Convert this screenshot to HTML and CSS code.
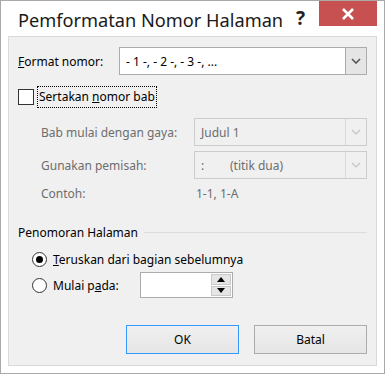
FILE: index.html
```html
<!DOCTYPE html>
<html lang="id">
<head>
    <meta charset="UTF-8">
    <title>Pemformatan Nomor Halaman</title>
    <link rel="stylesheet" href="styles.css">
</head>
<body>
    <div class="window">
        <div class="title-bar">
            <span class="title">Pemformatan Nomor Halaman</span>
            <span class="help">?</span>
            <span class="close">
                <svg width="14" height="12" viewBox="0 0 14 12">
                    <path d="M2 1 L12 11 M12 1 L2 11" stroke="#fff" stroke-width="2.6" fill="none"/>
                </svg>
            </span>
        </div>

        <div class="client">
            <div class="row format-row">
                <label class="label"><u>F</u>ormat nomor:</label>
                <div class="combo">
                    <span class="combo-text">- 1 -, - 2 -, - 3 -, ...</span>
                    <span class="combo-btn">
                        <svg width="10" height="6" viewBox="0 0 10 6"><path d="M1 1 L5 5 L9 1" stroke="#555" stroke-width="1.6" fill="none"/></svg>
                    </span>
                </div>
            </div>

            <div class="row check-row">
                <span class="checkbox"></span>
                <span class="focus-label">Sertakan <u>n</u>omor bab</span>
            </div>

            <div class="row sub-row first">
                <label class="label sub-label">Bab mulai dengan gaya:</label>
                <div class="combo disabled">
                    <span class="combo-text">Judul 1</span>
                    <span class="combo-btn">
                        <svg width="10" height="6" viewBox="0 0 10 6"><path d="M1 1 L5 5 L9 1" stroke="#c4c4c4" stroke-width="1.2" fill="none"/></svg>
                    </span>
                </div>
            </div>

            <div class="row sub-row">
                <label class="label sub-label">Gunakan pemisah:</label>
                <div class="combo disabled">
                    <span class="combo-text"><span class="sep">:</span>(titik dua)</span>
                    <span class="combo-btn">
                        <svg width="10" height="6" viewBox="0 0 10 6"><path d="M1 1 L5 5 L9 1" stroke="#c4c4c4" stroke-width="1.2" fill="none"/></svg>
                    </span>
                </div>
            </div>

            <div class="row example-row">
                <span class="label sub-label">Contoh:</span>
                <span class="example-value">1-1, 1-A</span>
            </div>

            <div class="group-head">
                <span>Penomoran Halaman</span>
                <span class="group-line"></span>
            </div>

            <div class="row radio-row">
                <span class="radio checked"></span>
                <span><u>T</u>eruskan dari bagian sebelumnya</span>
            </div>

            <div class="row radio-row second">
                <span class="radio"></span>
                <span class="radio-label">Mulai p<u>a</u>da:</span>
                <div class="spin">
                    <span class="spin-field"></span>
                    <span class="spin-btns">
                        <span class="spin-btn"><svg width="8" height="5" viewBox="0 0 8 5"><path d="M0 5 L4 0 L8 5 Z" fill="#000"/></svg></span>
                        <span class="spin-btn"><svg width="8" height="5" viewBox="0 0 8 5"><path d="M0 0 L4 5 L8 0 Z" fill="#000"/></svg></span>
                    </span>
                </div>
            </div>

            <div class="buttons">
                <button class="btn default">OK</button>
                <button class="btn">Batal</button>
            </div>
        </div>
    </div>
</body>
</html>
```

FILE: styles.css
```css
body {
    margin: 0;
    font-family: "Noto Sans", "Open Sans", sans-serif;
    font-size: 12px;
    color: #000;
    background: #fff;
}

.window {
    width: 385px;
    height: 374px;
    box-sizing: border-box;
    border: 1px solid #a9a9a9;
    background: #fff;
    padding: 0 7px 7px;
}

.title-bar {
    height: 35px;
    display: flex;
    align-items: flex-start;
    position: relative;
}

.title {
    font-size: 18.2px;
    margin: 7px 0 0 10px;
    color: #1a1a1a;
}

.help {
    position: absolute;
    left: 288px;
    top: 4px;
    font-size: 19px;
    font-weight: bold;
    color: #222;
}

.close {
    position: absolute;
    right: 0;
    top: 0;
    width: 58px;
    height: 25px;
    background: #c75050;
    display: flex;
    align-items: center;
    justify-content: center;
}

.client {
    height: 330px;
    box-sizing: border-box;
    border: 1px solid #d9d9d9;
    background: #f0f0f0;
    padding: 10px 9px 0 9px;
}

.row {
    display: flex;
    align-items: center;
}

.label {
    white-space: nowrap;
}

.format-row .label {
    width: 101px;
}

.combo {
    display: flex;
    align-items: stretch;
    height: 28px;
    box-sizing: border-box;
    border: 1px solid #acacac;
    background: #fff;
    flex: 1;
}

.combo-text {
    flex: 1;
    display: flex;
    align-items: center;
    padding-left: 6px;
}

.combo-btn {
    width: 20px;
    display: flex;
    align-items: center;
    justify-content: center;
    background: #e5e5e5;
    border-left: 1px solid #acacac;
}

.combo.disabled {
    border-color: #cccccc;
    background: #f0f0f0;
    color: #6d6d6d;
}

.combo.disabled .combo-btn {
    background: #f0f0f0;
    border-left-color: #d9d9d9;
}

.sep {
    width: 29px;
}

.check-row {
    margin-top: 12px;
    height: 20px;
}

.checkbox {
    width: 14px;
    height: 14px;
    border: 1px solid #333;
    background: #fff;
}

.focus-label {
    margin-left: 4px;
    padding: 1px 1px 2px;
    outline: 1px dotted #000;
}

.sub-row {
    margin-top: 5px;
    color: #6d6d6d;
}

.sub-row.first {
    margin-top: 11px;
}

.sub-label {
    width: 153px;
    padding-left: 23px;
    color: #6d6d6d;
}

.example-row {
    height: 18px;
    margin-top: 5px;
    color: #6d6d6d;
}

.example-value {
    padding-left: 2px;
}

.group-head {
    display: flex;
    align-items: center;
    margin-top: 21px;
    height: 18px;
}

.group-line {
    flex: 1;
    height: 1px;
    background: #dcdcdc;
    margin-left: 6px;
}

.radio-row {
    margin-top: 9px;
    padding-left: 14px;
    height: 18px;
}

.radio-row.second {
    margin-top: 4px;
    height: 26px;
}

.radio {
    width: 13px;
    height: 13px;
    border: 1px solid #333;
    border-radius: 50%;
    background: #fff;
    margin-right: 6px;
    position: relative;
}

.radio.checked::after {
    content: "";
    position: absolute;
    left: 3px;
    top: 3px;
    width: 7px;
    height: 7px;
    border-radius: 50%;
    background: #000;
}

.radio-label {
    width: 87px;
}

.spin {
    display: flex;
    width: 93px;
    height: 26px;
    box-sizing: border-box;
    border: 1px solid #acacac;
    background: #fff;
}

.spin-field {
    flex: 1;
}

.spin-btns {
    width: 20px;
    display: flex;
    flex-direction: column;
    gap: 1px;
    padding: 1px 1px 1px 0;
}

.spin-btn {
    flex: 1;
    background: #e5e5e5;
    border: 1px solid #c9c9c9;
    display: flex;
    align-items: center;
    justify-content: center;
}

.buttons {
    display: flex;
    justify-content: flex-end;
    gap: 15px;
    margin-top: 27px;
}

.btn {
    width: 113px;
    height: 29px;
    font-family: inherit;
    font-size: 12px;
    color: #000;
    border: 1px solid #acacac;
    background: linear-gradient(#f0f0f0, #e5e5e5);
    margin: 0;
    padding: 0;
}

.btn.default {
    border-color: #3399ff;
}
```
